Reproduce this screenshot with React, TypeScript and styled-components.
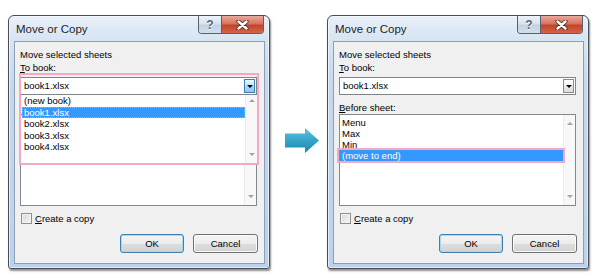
import styled, { createGlobalStyle } from "styled-components";

const GlobalStyle = createGlobalStyle`
  html, body {
    margin: 0;
    padding: 0;
    background: #fff;
  }
  body {
    width: 600px;
    height: 278px;
    overflow: hidden;
    font-family: "Liberation Sans", Arial, sans-serif;
  }
`;

const Page = styled.div`
  display: flex;
  align-items: flex-start;
  box-sizing: border-box;
  width: 600px;
  height: 278px;
  padding: 15px 0 0 8px;
`;

const Window = styled.div`
  width: 262px;
  height: 254px;
  box-sizing: border-box;
  flex-shrink: 0;
  border: 1px solid #474c55;
  border-radius: 6px 6px 3px 3px;
  background: linear-gradient(180deg, #e9f0f8 0px, #d8e5f3 22px, #c5d8ee 70px, #bcd2ec 100%);
  box-shadow: 1px 2px 2px rgba(0, 0, 0, 0.45), inset 0 0 0 1px rgba(255, 255, 255, 0.55);
  padding: 0 4px 4px 5px;
  display: flex;
  flex-direction: column;
`;

const TitleBar = styled.div`
  height: 25px;
  flex-shrink: 0;
  display: flex;
  align-items: flex-start;
`;

const Title = styled.div`
  margin: 6px 0 0 2px;
  font-size: 11.5px;
  line-height: 14px;
  color: #1e1e1e;
`;

const Caption = styled.div`
  margin-left: auto;
  margin-right: 1px;
  height: 17px;
  display: flex;
  border: 1px solid #56606f;
  border-top: none;
  border-radius: 0 0 4px 4px;
  overflow: hidden;
`;

const CaptionButton = styled.div<{ $close?: boolean }>`
  width: ${(p) => (p.$close ? 41 : 22)}px;
  display: flex;
  align-items: center;
  justify-content: center;
  border-left: ${(p) => (p.$close ? "1px solid #56606f" : "none")};
  background: ${(p) =>
    p.$close
      ? "linear-gradient(180deg, #e9a99c 0%, #d7735e 45%, #c4432a 55%, #d0664c 100%)"
      : "linear-gradient(180deg, #eef3f9 0%, #d9e2ee 45%, #c5d2e2 55%, #d3deeb 100%)"};
  font-size: 12px;
  font-weight: bold;
  color: #56657a;
  text-shadow: 0 1px 0 #fff;
`;

const Client = styled.div`
  flex: 1;
  min-height: 0;
  background: #f0f0f0;
  border: 1px solid #8d9fb6;
  padding: 6px 7px 0 5px;
  display: flex;
  flex-direction: column;
  font-size: 9.5px;
  color: #000;
`;

const Label = styled.div<{ $gap?: number; $covered?: boolean }>`
  line-height: 13px;
  margin-top: ${(p) => p.$gap ?? 0}px;
  white-space: nowrap;
  visibility: ${(p) => (p.$covered ? "hidden" : "visible")};
`;

const Combo = styled.div`
  position: relative;
  margin-top: 3px;
  height: 18px;
  box-sizing: border-box;
  border: 1px solid #7f848c;
  background: #fff;
  display: flex;
  align-items: center;
`;

const ComboText = styled.div`
  flex: 1;
  padding-left: 3px;
  line-height: 16px;
`;

const DropButton = styled.div<{ $hot?: boolean }>`
  width: 11px;
  height: 14px;
  box-sizing: border-box;
  margin-right: 1px;
  display: flex;
  align-items: center;
  justify-content: center;
  border: 1px solid ${(p) => (p.$hot ? "#3c7fb1" : "#8a8a8a")};
  background: ${(p) =>
    p.$hot
      ? "linear-gradient(180deg, #eaf6fd 0%, #bee6fd 50%, #a7d9f5 51%, #8fc7e8 100%)"
      : "linear-gradient(180deg, #fdfdfd 0%, #f1f1f1 50%, #e6e6e6 51%, #dcdcdc 100%)"};
`;

const Caret = styled.div<{ $dir?: "up" | "down"; $color?: string }>`
  width: 0;
  height: 0;
  border-left: 3px solid transparent;
  border-right: 3px solid transparent;
  ${(p) =>
    p.$dir === "up"
      ? `border-bottom: 3px solid ${p.$color ?? "#a3a3a3"};`
      : `border-top: 3px solid ${p.$color ?? "#a3a3a3"};`}
`;

const Dropdown = styled.div`
  position: absolute;
  top: calc(100% + 1px);
  left: 1px;
  right: -1px;
  height: 68px;
  background: #fff;
  display: flex;
  z-index: 2;
`;

const Highlight = styled.div<{ $inset: string }>`
  position: absolute;
  inset: ${(p) => p.$inset};
  box-sizing: border-box;
  border: 2px solid #f5a8c4;
  pointer-events: none;
  z-index: 3;
`;

const PinkFrame = styled(Highlight)`
  height: 92px;
  bottom: auto;
`;

const ListBox = styled.div`
  height: 92px;
  box-sizing: border-box;
  border: 1px solid #828790;
  background: #fff;
  display: flex;
`;

const Items = styled.div<{ $pad: number }>`
  flex: 1;
  padding-top: ${(p) => p.$pad}px;
`;

const Row = styled.div<{ $h: number; $selected?: boolean; $focus?: boolean }>`
  position: relative;
  height: ${(p) => p.$h}px;
  line-height: ${(p) => p.$h}px;
  padding-left: 2px;
  white-space: nowrap;
  color: ${(p) => (p.$selected ? "#fff" : "#000")};
  background: ${(p) => (p.$selected ? "#3399ff" : "transparent")};
  outline: ${(p) => (p.$focus ? "1px dotted #e6a261" : "none")};
  outline-offset: -1px;
`;

const ScrollCol = styled.div<{ $top: number; $bottom: number }>`
  width: 12px;
  box-sizing: border-box;
  background: #f8f8f8;
  border-left: 1px solid #ebebeb;
  display: flex;
  flex-direction: column;
  align-items: center;
  justify-content: space-between;
  padding: ${(p) => p.$top}px 0 ${(p) => p.$bottom}px;
`;

const CheckRow = styled.div`
  margin-top: 6px;
  height: 12px;
  display: flex;
  align-items: center;
  gap: 3px;
`;

const CheckBox = styled.div`
  width: 11px;
  height: 11px;
  box-sizing: border-box;
  margin-left: 1px;
  border: 1px solid #8e8f8f;
  background: linear-gradient(135deg, #d6d6d6, #f8f8f8);
  box-shadow: inset 0 0 0 1px #f2f2f2;
`;

const ButtonRow = styled.div`
  margin-top: 10px;
  margin-right: -1px;
  display: flex;
  justify-content: flex-end;
  gap: 9px;
`;

const Button = styled.div<{ $w: number; $default?: boolean }>`
  width: ${(p) => p.$w}px;
  height: 19px;
  box-sizing: border-box;
  border: 1px solid ${(p) => (p.$default ? "#3c7fb1" : "#707070")};
  border-radius: 3px;
  background: linear-gradient(180deg, #f4f4f4 0%, #ececec 50%, #dedede 51%, #d2d2d2 100%);
  box-shadow: inset 0 0 0 1px ${(p) => (p.$default ? "#9fdcf6" : "#fbfbfb")};
  text-align: center;
  line-height: 17px;
`;

const ArrowCol = styled.div`
  width: 57px;
  height: 254px;
  flex-shrink: 0;
  display: flex;
  align-items: center;
  justify-content: center;
  padding: 0 0 4px 6px;
  box-sizing: border-box;
`;

const CloseGlyph = () => (
  <svg width="13" height="10" viewBox="0 0 13 10">
    <path d="M2.5 1.5 L10.5 8.5 M10.5 1.5 L2.5 8.5" stroke="#5a2a22" strokeWidth="4.2" strokeLinecap="round" />
    <path d="M2.5 1.5 L10.5 8.5 M10.5 1.5 L2.5 8.5" stroke="#fff" strokeWidth="2.4" strokeLinecap="round" />
  </svg>
);

const BigArrow = () => (
  <svg width="34" height="25" viewBox="0 0 34 25">
    <defs>
      <linearGradient id="arrowFill" x1="0" y1="0" x2="0" y2="1">
        <stop offset="0" stopColor="#62c4de" />
        <stop offset="0.5" stopColor="#33a4c6" />
        <stop offset="1" stopColor="#1b88ad" />
      </linearGradient>
    </defs>
    <path d="M0 5.5 H20 V0 L34 12.5 L20 25 V19.5 H0 Z" fill="url(#arrowFill)" />
  </svg>
);

type DialogProps = {
  book: string;
  books?: string[];
  sheets: string[];
  selectedSheet?: number;
  open?: boolean;
};

const Dialog = ({ book, books = [], sheets, selectedSheet, open }: DialogProps) => (
  <Window>
    <TitleBar>
      <Title>Move or Copy</Title>
      <Caption>
        <CaptionButton>?</CaptionButton>
        <CaptionButton $close>
          <CloseGlyph />
        </CaptionButton>
      </Caption>
    </TitleBar>
    <Client>
      <Label>Move selected sheets</Label>
      <Label>
        <u>T</u>o book:
      </Label>
      <Combo>
        <ComboText>{book}</ComboText>
        <DropButton $hot={open}>
          <Caret $color="#000" />
        </DropButton>
        {open && (
          <>
            <Dropdown>
              <Items $pad={0}>
                {books.map((b) => (
                  <Row key={b} $h={11.6} $selected={b === book} $focus={b === book}>
                    {b}
                  </Row>
                ))}
              </Items>
              <ScrollCol $top={4} $bottom={7}>
                <Caret $dir="up" />
                <Caret />
              </ScrollCol>
            </Dropdown>
            <PinkFrame $inset="-5px -3px auto -2px" />
          </>
        )}
      </Combo>
      {/* the open drop-down list covers this label */}
      <Label $gap={6} $covered={open}>
        <u>B</u>efore sheet:
      </Label>
      <ListBox>
        <Items $pad={2}>
          {sheets.map((s, i) => (
            <Row key={s} $h={11} $selected={i === selectedSheet}>
              {s}
              {i === selectedSheet && <Highlight $inset="-2px -2px -2px -3px" />}
            </Row>
          ))}
        </Items>
        <ScrollCol $top={7} $bottom={7}>
          <Caret $dir="up" />
          <Caret />
        </ScrollCol>
      </ListBox>
      <CheckRow>
        <CheckBox />
        <span>
          <u>C</u>reate a copy
        </span>
      </CheckRow>
      <ButtonRow>
        <Button $w={64} $default>
          OK
        </Button>
        <Button $w={65}>Cancel</Button>
      </ButtonRow>
    </Client>
  </Window>
);

const App = () => (
  <>
    <GlobalStyle />
    <Page>
      <Dialog
        open
        book="book1.xlsx"
        books={["(new book)", "book1.xlsx", "book2.xlsx", "book3.xlsx", "book4.xlsx"]}
        sheets={[]}
      />
      <ArrowCol>
        <BigArrow />
      </ArrowCol>
      <Dialog book="book1.xlsx" sheets={["Menu", "Max", "Min", "(move to end)"]} selectedSheet={3} />
    </Page>
  </>
);

export default App;
